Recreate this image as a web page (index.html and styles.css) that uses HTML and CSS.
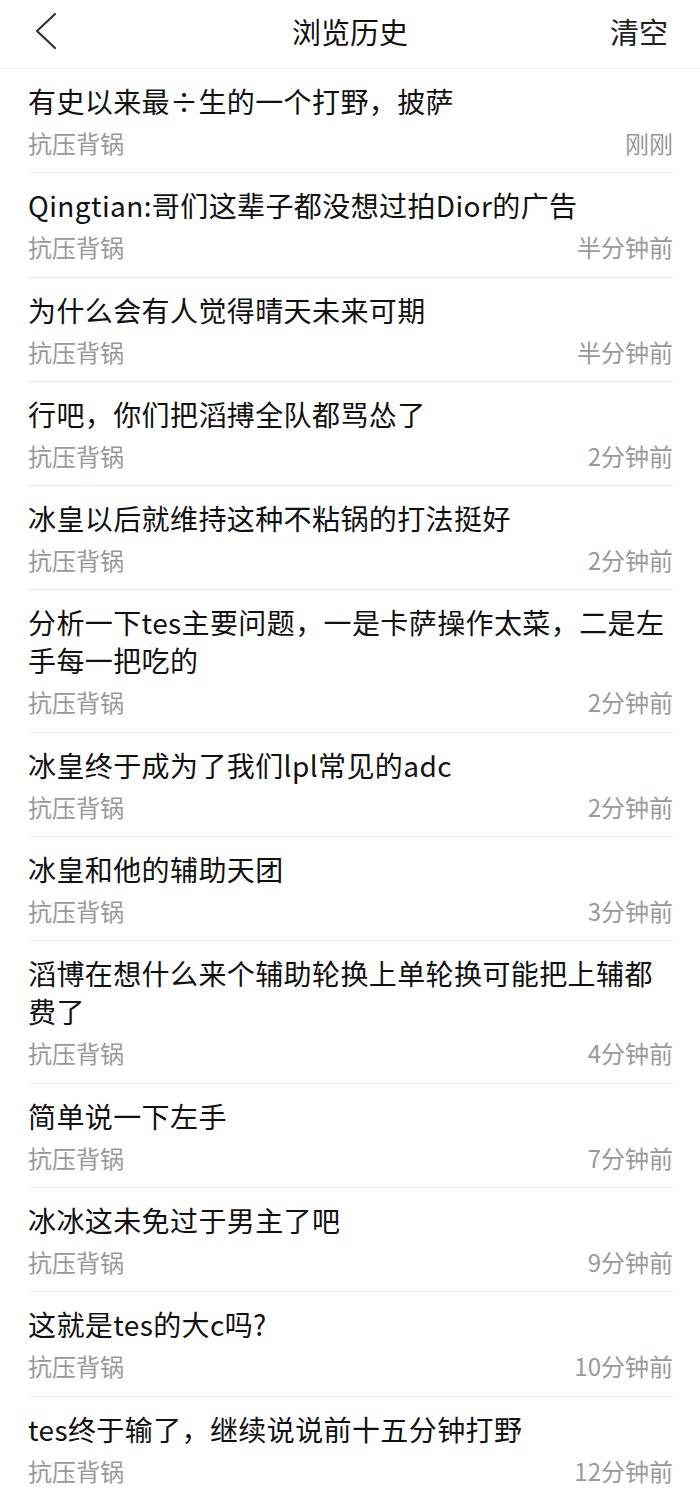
FILE: index.html
```html
<!DOCTYPE html>
<html lang="zh-CN">
<head>
<meta charset="utf-8">
<title>浏览历史</title>
<link rel="stylesheet" href="styles.css">
</head>
<body>
<header class="topbar">
  <div class="back">
    <svg width="24" height="40" viewBox="0 0 24 40" aria-hidden="true">
      <path d="M20 3 L2 20 L20 37" fill="none" stroke="#333" stroke-width="2.2" stroke-linecap="round" stroke-linejoin="round"/>
    </svg>
  </div>
  <h1 class="title">浏览历史</h1>
  <div class="clear">清空</div>
</header>
<ul class="list">
  <li class="item"><div class="item-title">有史以来最÷生的一个打野，披萨</div><div class="meta"><span>抗压背锅</span><span>刚刚</span></div></li>
  <li class="item"><div class="item-title">Qingtian:哥们这辈子都没想过拍Dior的广告</div><div class="meta"><span>抗压背锅</span><span>半分钟前</span></div></li>
  <li class="item"><div class="item-title">为什么会有人觉得晴天未来可期</div><div class="meta"><span>抗压背锅</span><span>半分钟前</span></div></li>
  <li class="item"><div class="item-title">行吧，你们把滔搏全队都骂怂了</div><div class="meta"><span>抗压背锅</span><span>2分钟前</span></div></li>
  <li class="item"><div class="item-title">冰皇以后就维持这种不粘锅的打法挺好</div><div class="meta"><span>抗压背锅</span><span>2分钟前</span></div></li>
  <li class="item"><div class="item-title">分析一下tes主要问题，一是卡萨操作太菜，二是左手每一把吃的</div><div class="meta"><span>抗压背锅</span><span>2分钟前</span></div></li>
  <li class="item"><div class="item-title">冰皇终于成为了我们lpl常见的adc</div><div class="meta"><span>抗压背锅</span><span>2分钟前</span></div></li>
  <li class="item"><div class="item-title">冰皇和他的辅助天团</div><div class="meta"><span>抗压背锅</span><span>3分钟前</span></div></li>
  <li class="item"><div class="item-title">滔博在想什么来个辅助轮换上单轮换可能把上辅都费了</div><div class="meta"><span>抗压背锅</span><span>4分钟前</span></div></li>
  <li class="item"><div class="item-title">简单说一下左手</div><div class="meta"><span>抗压背锅</span><span>7分钟前</span></div></li>
  <li class="item"><div class="item-title">冰冰这未免过于男主了吧</div><div class="meta"><span>抗压背锅</span><span>9分钟前</span></div></li>
  <li class="item"><div class="item-title">这就是tes的大c吗?</div><div class="meta"><span>抗压背锅</span><span>10分钟前</span></div></li>
  <li class="item"><div class="item-title">tes终于输了，继续说说前十五分钟打野</div><div class="meta"><span>抗压背锅</span><span>12分钟前</span></div></li>
</ul>
</body>
</html>
```

FILE: styles.css
```css
* { box-sizing: border-box; }
html, body {
  margin: 0;
  padding: 0;
  background: #fff;
}
body {
  font-family: "Noto Sans CJK SC", "Noto Sans", sans-serif;
  color: #111;
}
.topbar {
  height: 69px;
  display: grid;
  grid-template-columns: 1fr auto 1fr;
  align-items: center;
  border-bottom: 1px solid #f0f0f0;
  padding-bottom: 6px;
}
.back {
  padding-left: 35px;
  display: flex;
  align-items: center;
}
.back svg { display: block; }
.title {
  margin: 0;
  font-size: 29px;
  font-weight: 400;
  line-height: 40px;
  color: #111;
}
.clear {
  justify-self: end;
  padding-right: 32px;
  font-size: 29px;
  line-height: 40px;
  color: #222;
}
.list {
  list-style: none;
  margin: 0;
  padding: 0 27px 0 28px;
}
.item {
  padding: 13px 0 13.3px;
  border-bottom: 1px solid #ececec;
}
.item-title {
  font-size: 28px;
  line-height: 38px;
  letter-spacing: 0.4px;
  color: #111;
}
.meta {
  margin-top: 7px;
  display: flex;
  justify-content: space-between;
  font-size: 24px;
  line-height: 32px;
  color: #999;
}
```
